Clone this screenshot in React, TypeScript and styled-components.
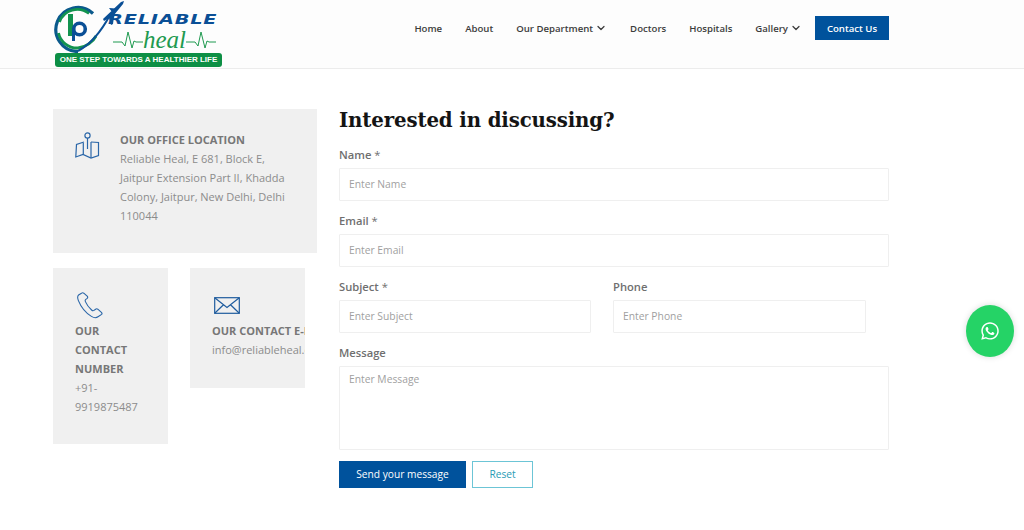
import React from "react";
import styled, { createGlobalStyle } from "styled-components";
import { FaWhatsapp } from "react-icons/fa";
import { FiChevronDown } from "react-icons/fi";

const GlobalStyle = createGlobalStyle`
  html, body {
    margin: 0;
    padding: 0;
    background: #fff;
    font-family: "Open Sans", "Liberation Sans", sans-serif;
  }
  * { box-sizing: border-box; }
`;

const LogoMark = () => (
  <svg width="74" height="53" viewBox="0 0 74 53" fill="none">
    <path d="M40 13.5 A22 22 0 1 0 25 51.5" stroke="#0b5a8c" strokeWidth="3.2" fill="none" />
    <path d="M6.5 22 A19 19 0 0 1 36 13.5" stroke="#12934f" strokeWidth="2.6" fill="none" />
    <path d="M5.5 33 A19 19 0 0 0 25 48 C33 47 40 42 43 36" stroke="#12934f" strokeWidth="2.8" fill="none" />
    <path d="M15 14 H20 V36 H15 Z" fill="#12934f" />
    <circle cx="26.5" cy="29" r="5.8" stroke="#0a4f96" strokeWidth="3.6" fill="none" />
    <path d="M19 29 H22 V41 H19 Z" fill="#0a4f96" />
    <path d="M25 51 C38 44 49 30 57 15" stroke="#0a4f96" strokeWidth="2" fill="none" />
    <path d="M50 19 L68 2 L71 1 L70 4 L61 15 L60 24 L58 25 L56 18 L51 21 Z M56 8 L63 8.5 L59 12 Z" fill="#0a4f96" />
  </svg>
);

const Pulse = () => (
  <svg width="30" height="20" viewBox="0 0 30 20" fill="none">
    <path d="M0 12 H9 L12 16 L15 2 L19 18 L21 11 L23 12 H30" stroke="#1f9a50" strokeWidth="1" />
  </svg>
);

const MapIcon = () => (
  <svg width="25" height="28" viewBox="0 0 25 28" fill="none" stroke="#2a66a8" strokeWidth="1.2">
    <circle cx="12.5" cy="3.5" r="2.6" />
    <path d="M12.5 6 V17" />
    <path d="M9 10 L1.5 12.5 L0.8 25 L8 22.5 L16 26 L23.5 23.5 L23.5 10.5 L16 10" />
    <path d="M8.3 11 V22.5 M16 10 V26" />
  </svg>
);

const PhoneIcon = () => (
  <svg width="26" height="27" viewBox="0 0 26 27" fill="none" stroke="#2a66a8" strokeWidth="1.1">
    <path d="M4.5 1.2 L1.6 3 C0.4 4 0.4 6 1.4 8.6 C3.6 14 8.6 20.8 14.4 24.4 C17 26 19.4 26 21 24.8 L24.6 22.4 C25.2 21.8 25 21 24.4 20.4 L20.8 17.2 C20 16.6 19.4 16.6 18.6 17.2 L17 18.4 C16.2 19 15.4 18.8 14.6 18 C12 15.6 9.6 12.4 8.4 9.6 C8 8.6 8 8 8.8 7.4 L10.2 6.4 C10.8 5.8 10.8 5 10.4 4.4 L6.8 1.2 C6 0.6 5.2 0.6 4.5 1.2 Z" />
  </svg>
);

const MailIcon = () => (
  <svg width="26" height="17" viewBox="0 0 26 17" fill="none" stroke="#1f5c9e" strokeWidth="1.2">
    <rect x="0.7" y="0.7" width="24.6" height="15.6" />
    <path d="M0.7 0.7 L13 10.5 L25.3 0.7 M0.7 16.3 L9.5 7.8 M25.3 16.3 L16.5 7.8" />
  </svg>
);

const navItems = [
  { label: "Home" },
  { label: "About" },
  { label: "Our Department", caret: true },
  { label: "Doctors" },
  { label: "Hospitals" },
  { label: "Gallery", caret: true },
];

export default function App() {
  return (
    <Page>
      <GlobalStyle />
      <Header>
        <Logo>
          <LogoTop>
            <LogoMark />
            <LogoWords>
              <Reliable>RELIABLE</Reliable>
              <HealRow>
                <Pulse />
                <Heal>heal</Heal>
                <Pulse />
              </HealRow>
            </LogoWords>
          </LogoTop>
          <Tagline>ONE STEP TOWARDS A HEALTHIER LIFE</Tagline>
        </Logo>
        <Nav>
          {navItems.map((item) => (
            <NavLink key={item.label}>
              {item.label}
              {item.caret && <FiChevronDown size={12} strokeWidth={2.5} />}
            </NavLink>
          ))}
          <ContactButton>Contact Us</ContactButton>
        </Nav>
      </Header>

      <Main>
        <Side>
          <OfficeCard>
            <OfficeIcon>
              <MapIcon />
            </OfficeIcon>
            <div>
              <CardTitle>OUR OFFICE LOCATION</CardTitle>
              <CardText>
                Reliable Heal, E 681, Block E, Jaitpur Extension Part II, Khadda Colony, Jaitpur, New Delhi, Delhi 110044
              </CardText>
            </div>
          </OfficeCard>
          <SmallCards>
            <PhoneCard>
              <SmallIcon>
                <PhoneIcon />
              </SmallIcon>
              <CardTitle>OUR CONTACT NUMBER</CardTitle>
              <CardText>+91-9919875487</CardText>
            </PhoneCard>
            <MailCard>
              <SmallIcon>
                <MailIcon />
              </SmallIcon>
              <NoWrapTitle>OUR CONTACT E-MAIL</NoWrapTitle>
              <NoWrapText>info@reliableheal.com</NoWrapText>
            </MailCard>
          </SmallCards>
        </Side>

        <Form>
          <Heading>Interested in discussing?</Heading>
          <Label>Name <Star>*</Star></Label>
          <Input placeholder="Enter Name" />
          <Label>Email <Star>*</Star></Label>
          <Input placeholder="Enter Email" />
          <TwoCols>
            <div>
              <Label>Subject <Star>*</Star></Label>
              <Input placeholder="Enter Subject" />
            </div>
            <div>
              <Label>Phone</Label>
              <Input placeholder="Enter Phone" />
            </div>
          </TwoCols>
          <Label>Message</Label>
          <TextArea placeholder="Enter Message" />
          <Buttons>
            <SendButton type="button">Send your message</SendButton>
            <ResetButton type="button">Reset</ResetButton>
          </Buttons>
        </Form>
      </Main>

      <WhatsApp>
        <FaWhatsapp size={20} color="#fff" />
      </WhatsApp>
    </Page>
  );
}

const Page = styled.div`
  width: 1024px;
  height: 530px;
  overflow: hidden;
  background: #fff;
`;

const Header = styled.header`
  height: 69px;
  padding: 0 135px 0 53px;
  display: flex;
  justify-content: space-between;
  background: #fdfdfd;
  border-bottom: 1px solid #ececec;
`;

const Logo = styled.div`
  width: 170px;
  display: flex;
  flex-direction: column;
`;

const LogoTop = styled.div`
  height: 53px;
  display: flex;
`;

const LogoWords = styled.div`
  margin-left: -19px;
  padding-top: 11px;
`;

const Reliable = styled.div`
  font-family: "DejaVu Sans", sans-serif;
  font-weight: 700;
  font-style: italic;
  font-size: 14px;
  line-height: 16px;
  letter-spacing: 0.6px;
  color: #0a4f96;
  white-space: nowrap;
  transform: scaleX(1.38);
  transform-origin: left center;
`;

const HealRow = styled.div`
  display: flex;
  align-items: center;
  height: 25px;
  margin-left: 5px;
`;

const Heal = styled.span`
  font-family: "Liberation Serif", serif;
  font-style: italic;
  font-size: 25px;
  line-height: 25px;
  color: #1f9a50;
`;

const Tagline = styled.div`
  width: 167px;
  height: 14px;
  margin-left: 2px;
  border-radius: 3px;
  background: #0d8f45;
  color: #fff;
  font-family: "Liberation Sans", sans-serif;
  font-weight: 700;
  font-size: 8px;
  line-height: 14px;
  text-align: center;
  white-space: nowrap;
`;

const Nav = styled.nav`
  height: 56px;
  display: flex;
  align-items: center;
  gap: 23px;
`;

const NavLink = styled.a`
  display: flex;
  align-items: center;
  gap: 2px;
  font-size: 9.6px;
  font-weight: 600;
  color: #3c3c3c;
  white-space: nowrap;
`;

const ContactButton = styled.a`
  width: 74px;
  height: 24px;
  margin-left: -10px;
  display: flex;
  align-items: center;
  justify-content: center;
  background: #00529c;
  color: #fff;
  font-size: 9.6px;
  font-weight: 600;
  white-space: nowrap;
`;

const Main = styled.main`
  padding: 40px 0 0 53px;
  display: flex;
  gap: 22px;
`;

const Side = styled.aside`
  width: 264px;
`;

const Card = styled.div`
  background: #f0f0f0;
`;

const OfficeCard = styled(Card)`
  height: 144px;
  padding: 21px 30px 0 22px;
  display: flex;
  gap: 19px;
  margin-bottom: 15px;
`;

const OfficeIcon = styled.div`
  width: 26px;
  flex: none;
  margin-top: 2px;
`;

const CardTitle = styled.div`
  font-size: 11px;
  line-height: 19px;
  font-weight: 700;
  color: #777;
`;

const CardText = styled.div`
  font-size: 11px;
  line-height: 19px;
  color: #8c8c8c;
`;

const NoWrapTitle = styled(CardTitle)`
  white-space: nowrap;
`;

const NoWrapText = styled(CardText)`
  white-space: nowrap;
`;

const SmallCards = styled.div`
  display: flex;
  align-items: flex-start;
  gap: 22px;
`;

const SmallIcon = styled.div`
  height: 25px;
  display: flex;
  align-items: center;
  margin-left: 2px;
  margin-bottom: 3px;
`;

const PhoneCard = styled(Card)`
  width: 115px;
  height: 176px;
  padding: 25px 22px 0;
  word-break: break-word;
`;

const MailCard = styled(Card)`
  width: 115px;
  height: 120px;
  padding: 25px 0 0 22px;
  overflow: hidden;
`;

const Form = styled.form`
  width: 550px;
`;

const Heading = styled.h2`
  margin: -2px 0 15px;
  font-family: "DejaVu Serif", "Liberation Serif", serif;
  font-size: 19.8px;
  line-height: 26px;
  font-weight: 700;
  color: #141414;
  letter-spacing: -0.15px;
  white-space: nowrap;
`;

const Label = styled.label`
  display: block;
  height: 21px;
  font-size: 11.2px;
  line-height: 14px;
  font-weight: 600;
  color: #6f6f6f;
`;

const Star = styled.span`
  font-weight: 400;
`;

const Input = styled.input`
  display: block;
  width: 100%;
  height: 33px;
  margin: -1px 0 13px;
  padding: 0 9px 2px;
  border: 1px solid #efefef;
  border-radius: 1px;
  background: #fff;
  font-family: inherit;
  font-size: 10.3px;
  outline: none;
  &::placeholder { color: #9f9f9f; opacity: 1; }
`;

const TwoCols = styled.div`
  display: grid;
  grid-template-columns: 252px 253px;
  gap: 22px;
`;

const TextArea = styled.textarea`
  display: block;
  width: 100%;
  height: 84px;
  margin: -1px 0 11px;
  padding: 5px 9px;
  border: 1px solid #efefef;
  border-radius: 1px;
  background: #fff;
  font-family: inherit;
  font-size: 10.3px;
  line-height: 14px;
  resize: none;
  outline: none;
  &::placeholder { color: #9f9f9f; opacity: 1; }
`;

const Buttons = styled.div`
  display: flex;
  gap: 6px;
`;

const SendButton = styled.button`
  width: 127px;
  height: 27px;
  padding: 0 0 2px;
  border: 0;
  background: #00529c;
  color: #fff;
  font-family: inherit;
  font-size: 10.2px;
`;

const ResetButton = styled.button`
  width: 61px;
  height: 27px;
  padding: 0 0 2px;
  border: 1px solid #6cc5d6;
  background: #fff;
  color: #2a9cb4;
  font-family: inherit;
  font-size: 10.2px;
`;

const WhatsApp = styled.div`
  position: fixed;
  left: 966px;
  top: 305px;
  width: 48px;
  height: 52px;
  border-radius: 50%;
  display: flex;
  align-items: center;
  justify-content: center;
  background: #25d366;
  box-shadow: 0 0 6px rgba(0, 0, 0, 0.15);
`;
